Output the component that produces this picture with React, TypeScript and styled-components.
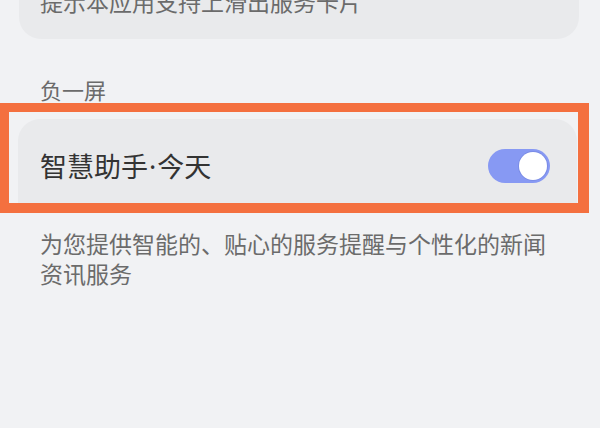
import React from "react";
import styled, { createGlobalStyle } from "styled-components";

const GlobalStyle = createGlobalStyle`
  html, body {
    margin: 0;
    padding: 0;
    background: #f1f2f4;
    font-family: "Noto Sans CJK SC", "Noto Sans", sans-serif;
  }
`;

const Page = styled.div`
  width: 600px;
  height: 428px;
  overflow: hidden;
  background: #f1f2f4;
`;

const Inner = styled.div`
  display: flex;
  flex-direction: column;
  margin-top: -40px;
`;

const Card = styled.div`
  margin: 0 21px 0 19px;
  padding: 26px 20px 23px 21px;
  background: #e9eaec;
  border-radius: 22px;
`;

const CardHint = styled.div`
  font-size: 23px;
  line-height: 30px;
  color: #6b6b6b;
  white-space: nowrap;
`;

const SectionLabel = styled.div`
  margin-top: 35px;
  padding-left: 40px;
  font-size: 22px;
  line-height: 30px;
  color: #6b6b6b;
`;

const Highlight = styled.div`
  width: 589px;
  box-sizing: border-box;
  margin-top: -1px;
  border-style: solid;
  border-color: #f4703f;
  border-width: 9px 11px 10px 9px;
  padding: 7px 1px 0 9px;
  background: #f1f2f4;
`;

const SwitchRow = styled.div`
  height: 84px;
  box-sizing: border-box;
  padding: 10px 27px 0 22px;
  display: flex;
  align-items: center;
  justify-content: space-between;
  background: #e9eaec;
  border-radius: 22px 22px 0 0;
`;

const RowTitle = styled.div`
  font-size: 27px;
  line-height: 34px;
  color: #333333;
`;

const Dot = styled.span`
  font-family: "Noto Sans", "DejaVu Sans", sans-serif;
  margin: 0 1px;
`;

const Track = styled.div<{ $on: boolean }>`
  width: 62px;
  height: 34px;
  box-sizing: border-box;
  border-radius: 17px;
  padding: 3px;
  display: flex;
  justify-content: ${(p) => (p.$on ? "flex-end" : "flex-start")};
  align-items: center;
  background: ${(p) => (p.$on ? "#8799f3" : "#c8c9cc")};
`;

const Knob = styled.div`
  width: 28px;
  height: 28px;
  border-radius: 50%;
  background: #ffffff;
  box-shadow: 0 0 0 1px #7a8ce6;
`;

const Description = styled.div`
  margin-top: 15px;
  padding: 0 45px 0 40px;
  font-size: 23px;
  line-height: 30px;
  color: #6b6b6b;
`;

export default function App() {
  return (
    <Page>
      <GlobalStyle />
      <Inner>
        <Card>
          <CardHint>提示本应用支持上滑出服务卡片</CardHint>
        </Card>
        <SectionLabel>负一屏</SectionLabel>
        <Highlight>
          <SwitchRow>
            <RowTitle>
              智慧助手<Dot>·</Dot>今天
            </RowTitle>
            <Track $on={true}>
              <Knob />
            </Track>
          </SwitchRow>
        </Highlight>
        <Description>为您提供智能的、贴心的服务提醒与个性化的新闻资讯服务</Description>
      </Inner>
    </Page>
  );
}
